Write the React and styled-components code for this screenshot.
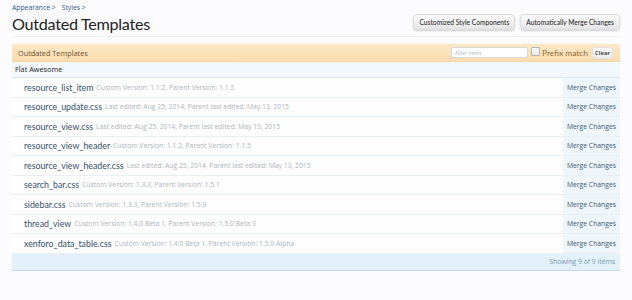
import React from "react";
import styled, { createGlobalStyle } from "styled-components";

const Global = createGlobalStyle`
  body {
    margin: 0;
    background: #fcfcfe;
    font-family: "Open Sans", "Liberation Sans", sans-serif;
    color: #141414;
  }
`;

const Page = styled.div`
  padding: 3px 12px 0 12px;
`;

const Crumbs = styled.div`
  font-size: 6.8px;
  color: #2b5a8c;
  height: 10px;
  line-height: 10px;
  span {
    margin-right: 6px;
  }
`;

const TitleBar = styled.div`
  display: flex;
  align-items: flex-start;
  justify-content: space-between;
  height: 23px;
  border-bottom: 1px solid #eef0f4;
  margin-bottom: 7px;
`;

const Title = styled.h1`
  margin: 0;
  font-family: "Lato", "Open Sans", sans-serif;
  font-weight: 400;
  font-size: 16.2px;
  letter-spacing: -0.3px;
  line-height: 21px;
  color: #222;
`;

const Actions = styled.div`
  display: flex;
  gap: 5px;
  margin-top: 1px;
`;

const TopButton = styled.button`
  font-family: "Lato", "Open Sans", sans-serif;
  font-size: 6.7px;
  color: #222;
  height: 16px;
  padding: 0 5px;
  border: 1px solid #dcdcdc;
  border-radius: 4px;
  background: linear-gradient(#fbfbfb, #e6e6e6);
  box-shadow: 0 1px 2px rgba(0, 0, 0, 0.18);
`;

const Table = styled.div`
  border-bottom: 1px solid #c9dbe8;
`;

const Header = styled.div`
  display: flex;
  align-items: center;
  height: 17px;
  padding: 0 6px;
  background: linear-gradient(#fde8c6, #fadcb0);
  border-bottom: 1px solid #f4d7a8;
  font-size: 7.3px;
  color: #6e5230;
`;

const HeaderTitle = styled.div`
  flex: 1;
`;

const Filter = styled.input`
  width: 77px;
  height: 11px;
  padding: 0 3px;
  box-sizing: border-box;
  border: 1px solid #d8d8d8;
  border-radius: 2px;
  background: #fff;
  font-family: "Open Sans", sans-serif;
  font-size: 5.5px;
  font-style: italic;
  &::placeholder {
    color: #b4b8c4;
  }
`;

const Check = styled.span`
  width: 7px;
  height: 7px;
  margin: -3px 2px 0 3px;
  border: 1px solid #b5b5b5;
  border-radius: 1px;
  background: linear-gradient(#fff, #e8e8e8);
`;

const Prefix = styled.span`
  font-family: "Lato", sans-serif;
  font-size: 8.4px;
  color: #8a6a3c;
  margin-right: 4px;
`;

const Clear = styled.button`
  font-family: "Open Sans", sans-serif;
  font-size: 6px;
  font-weight: 600;
  color: #333;
  height: 12px;
  padding: 0 2px;
  border: 1px solid #e2e2e2;
  border-radius: 3px;
  background: linear-gradient(#fbfbfb, #ececec);
  margin-right: 1px;
`;

const Group = styled.div`
  height: 15px;
  line-height: 15px;
  padding-left: 3px;
  font-size: 7.3px;
  color: #222;
  background: #f1f7fb;
  border-bottom: 1px solid #dce9f2;
`;

const Row = styled.div`
  display: flex;
  height: 19.5px;
  border-bottom: 1px solid #e8eff5;
  box-sizing: border-box;
`;

const Cell = styled.div`
  flex: 1;
  display: flex;
  align-items: center;
  padding-left: 12px;
  white-space: nowrap;
  background: #fefeff;
`;

const Name = styled.span`
  font-family: "Lato", "Open Sans", sans-serif;
  font-size: 8.8px;
  color: #34506a;
  margin-right: 3px;
`;

const Meta = styled.span`
  font-size: 6.8px;
  color: #adb5bd;
`;

const MergeCell = styled.div`
  width: 53px;
  display: flex;
  align-items: center;
  justify-content: flex-end;
  padding-right: 4px;
  background: #eef6fb;
  font-size: 6.8px;
  color: #3e5a72;
`;

const Footer = styled.div`
  height: 16px;
  line-height: 16px;
  text-align: right;
  padding-right: 5px;
  background: #e3f1fa;
  font-size: 6.8px;
  color: #7c98ae;
`;

const templates = [
  ["resource_list_item", "Custom Version: 1.1.2, Parent Version: 1.1.5"],
  ["resource_update.css", "Last edited: Aug 25, 2014, Parent last edited: May 13, 2015"],
  ["resource_view.css", "Last edited: Aug 25, 2014, Parent last edited: May 13, 2015"],
  ["resource_view_header", "Custom Version: 1.1.2, Parent Version: 1.1.5"],
  ["resource_view_header.css", "Last edited: Aug 25, 2014, Parent last edited: May 13, 2015"],
  ["search_bar.css", "Custom Version: 1.3.3, Parent Version: 1.5.1"],
  ["sidebar.css", "Custom Version: 1.3.3, Parent Version: 1.5.9"],
  ["thread_view", "Custom Version: 1.4.0 Beta 1, Parent Version: 1.5.0 Beta 3"],
  ["xenforo_data_table.css", "Custom Version: 1.4.0 Beta 1, Parent Version: 1.5.0 Alpha"],
];

export default function App() {
  return (
    <Page>
      <Global />
      <Crumbs>
        <span>Appearance &gt;</span>
        <span>Styles &gt;</span>
      </Crumbs>
      <TitleBar>
        <Title>Outdated Templates</Title>
        <Actions>
          <TopButton>Customized Style Components</TopButton>
          <TopButton>Automatically Merge Changes</TopButton>
        </Actions>
      </TitleBar>
      <Table>
        <Header>
          <HeaderTitle>Outdated Templates</HeaderTitle>
          <Filter placeholder="Filter items" />
          <Check />
          <Prefix>Prefix match</Prefix>
          <Clear>Clear</Clear>
        </Header>
        <Group>Flat Awesome</Group>
        {templates.map(([name, meta]) => (
          <Row key={name}>
            <Cell>
              <Name>{name}</Name>
              <Meta>{meta}</Meta>
            </Cell>
            <MergeCell>Merge Changes</MergeCell>
          </Row>
        ))}
        <Footer>Showing 9 of 9 items</Footer>
      </Table>
    </Page>
  );
}
